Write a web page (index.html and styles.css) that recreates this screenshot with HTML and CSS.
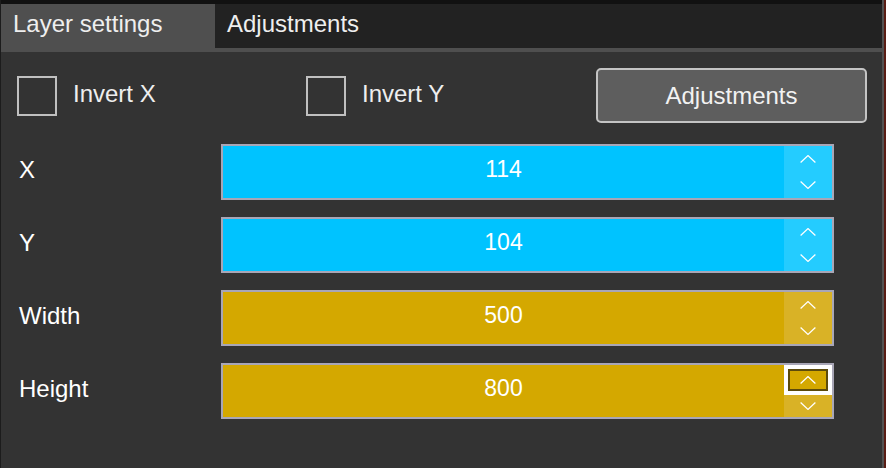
FILE: index.html
```html
<!DOCTYPE html>
<html>
<head>
<meta charset="utf-8">
<title>Layer settings</title>
<link rel="stylesheet" href="styles.css">
</head>
<body>
<div class="panel">
  <div class="tabs">
    <div class="tab active">Layer settings</div>
    <div class="tab">Adjustments</div>
  </div>
  <div class="content">
    <div class="toprow">
      <div class="check check-x"><span class="box"></span><span class="check-text">Invert X</span></div>
      <div class="check"><span class="box"></span><span class="check-text">Invert Y</span></div>
      <button class="btn">Adjustments</button>
    </div>
    <div class="fields">
      <div class="row">
        <span class="label">X</span>
        <div class="field cyan">
          <span class="value">114</span>
          <div class="spin">
            <div class="spin-btn"><svg class="chev" viewBox="0 0 16 8"><polyline points="0.6,7.4 8,0.6 15.4,7.4"/></svg></div>
            <div class="spin-btn"><svg class="chev" viewBox="0 0 16 8"><polyline points="0.6,0.6 8,7.4 15.4,0.6"/></svg></div>
          </div>
        </div>
      </div>
      <div class="row">
        <span class="label">Y</span>
        <div class="field cyan">
          <span class="value">104</span>
          <div class="spin">
            <div class="spin-btn"><svg class="chev" viewBox="0 0 16 8"><polyline points="0.6,7.4 8,0.6 15.4,7.4"/></svg></div>
            <div class="spin-btn"><svg class="chev" viewBox="0 0 16 8"><polyline points="0.6,0.6 8,7.4 15.4,0.6"/></svg></div>
          </div>
        </div>
      </div>
      <div class="row">
        <span class="label">Width</span>
        <div class="field gold">
          <span class="value">500</span>
          <div class="spin">
            <div class="spin-btn"><svg class="chev" viewBox="0 0 16 8"><polyline points="0.6,7.4 8,0.6 15.4,7.4"/></svg></div>
            <div class="spin-btn"><svg class="chev" viewBox="0 0 16 8"><polyline points="0.6,0.6 8,7.4 15.4,0.6"/></svg></div>
          </div>
        </div>
      </div>
      <div class="row">
        <span class="label">Height</span>
        <div class="field gold">
          <span class="value">800</span>
          <div class="spin">
            <div class="spin-btn focus"><span class="ring"><svg class="chev" viewBox="0 0 16 8"><polyline points="0.6,7.4 8,0.6 15.4,7.4"/></svg></span></div>
            <div class="spin-btn"><svg class="chev" viewBox="0 0 16 8"><polyline points="0.6,0.6 8,7.4 15.4,0.6"/></svg></div>
          </div>
        </div>
      </div>
    </div>
  </div>
</div>
</body>
</html>
```
FILE: styles.css
```css
html, body {
  margin: 0;
  padding: 0;
}
body {
  background: #5a1d14;
  font-family: "Liberation Sans", Arial, Helvetica, sans-serif;
  width: 886px;
  height: 468px;
  overflow: hidden;
}
.panel {
  width: 884px;
  height: 468px;
  box-sizing: border-box;
  background: #333333;
  border-left: 1px solid #1c1c1c;
  border-right: 2px solid #525252;
}
.tabs {
  display: flex;
  height: 44px;
  background: #222222;
  border-top: 4px solid #111111;
  border-bottom: 4px solid #4f4f4f;
}
.tab {
  padding: 0 12px 4px 12px;
  line-height: 40px;
  font-size: 24px;
  color: #eeeeee;
}
.tab.active {
  width: 214px;
  box-sizing: border-box;
  background: #4f4f4f;
}
.content {
  padding: 16px 15px 0 16px;
}
.toprow {
  display: flex;
  align-items: center;
  height: 55px;
}
.check {
  display: flex;
  align-items: center;
  gap: 16px;
  font-size: 24px;
  color: #eeeeee;
}
.check-x {
  width: 289px;
}
.box {
  width: 40px;
  height: 40px;
  box-sizing: border-box;
  border: 2px solid #c0c0c0;
  margin-top: 1px;
}
.check-text {
  margin-bottom: 4px;
}
.btn {
  margin-left: auto;
  width: 271px;
  height: 55px;
  box-sizing: border-box;
  background: #5e5e5e;
  border: 2px solid #c4c4c4;
  border-radius: 5px;
  color: #f2f2f2;
  font-family: inherit;
  font-size: 24px;
  padding: 0;
}
.fields {
  display: flex;
  flex-direction: column;
  gap: 17px;
  margin-top: 21px;
}
.row {
  display: flex;
  align-items: center;
  height: 56px;
}
.label {
  width: 204px;
  box-sizing: border-box;
  padding-left: 2px;
  margin-bottom: 5px;
  font-size: 24px;
  color: #ffffff;
}
.field {
  width: 613px;
  height: 56px;
  box-sizing: border-box;
  border: 2px solid #a8a6b6;
  display: flex;
}
.field.cyan {
  background: #00c3ff;
}
.field.gold {
  background: #d4a800;
}
.value {
  flex: 1;
  text-align: center;
  font-size: 23px;
  line-height: 46px;
  color: #ffffff;
}
.spin {
  width: 48px;
  display: flex;
  flex-direction: column;
}
.cyan .spin {
  background: #24ccff;
}
.gold .spin {
  background: #d9b226;
}
.spin-btn {
  flex: 1;
  display: flex;
  align-items: center;
  justify-content: center;
}
.spin-btn.focus {
  background: #ffffff;
  padding: 4px;
  align-items: stretch;
}
.ring {
  flex: 1;
  display: flex;
  align-items: center;
  justify-content: center;
  border: 2px solid #5c4b0c;
  background: #d4a800;
}
.chev {
  width: 16px;
  height: 8px;
  display: block;
}
.chev polyline {
  fill: none;
  stroke: #ffffff;
  stroke-width: 1.3;
}
```
